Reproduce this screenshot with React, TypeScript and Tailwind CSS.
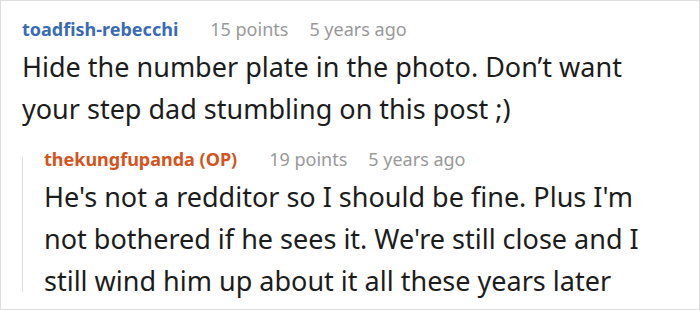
import React from "react";

function Meta({ name, color, points }: { name: string; color: string; points: string }) {
  return (
    <div className="flex items-baseline text-[18px] leading-[24px]">
      <span className={`font-bold ${color}`}>{name}</span>
      <span className="ml-[32px] text-[#999999]">{points}</span>
      <span className="ml-[21px] text-[#999999]">5 years ago</span>
    </div>
  );
}

export default function App() {
  return (
    <div className="w-[700px] h-[310px] bg-white border border-[#dedede] overflow-hidden font-['Noto_Sans','Open_Sans',sans-serif]">
      <div className="pl-[21px] pt-[16px] pr-[20px]">
        <Meta name="toadfish-rebecchi" color="text-[#3a6bb4]" points="15 points" />
        <p className="mt-[5px] text-[27px] leading-[42px] text-[#1c1c1c] w-[620px]">
          Hide the number plate in the photo. Don’t want your step dad stumbling on this post ;)
        </p>
        <div className="flex mt-[17px]">
          <div className="w-px bg-[#dedede] mt-[10px] mb-[10px] shrink-0" />
          <div className="pl-[21px]">
            <Meta name="thekungfupanda (OP)" color="text-[#d5531c]" points="19 points" />
            <p className="mt-[5px] text-[27px] leading-[42px] text-[#1c1c1c] w-[630px]">
              He's not a redditor so I should be fine. Plus I'm not bothered if he sees it. We're still close and I still wind him up about it all these years later
            </p>
          </div>
        </div>
      </div>
    </div>
  );
}
